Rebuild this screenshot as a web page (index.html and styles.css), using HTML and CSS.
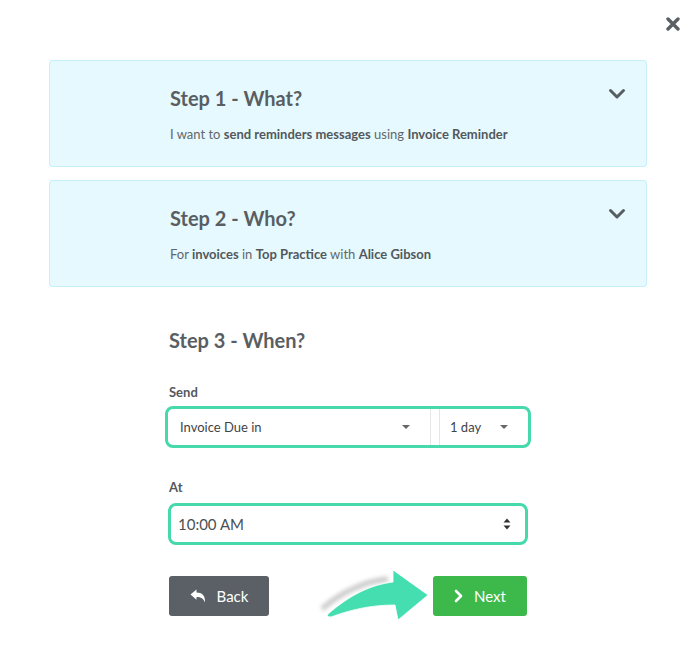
FILE: index.html
```html
<!DOCTYPE html>
<html lang="en">
  <head>
    <meta charset="UTF-8" />
    <meta name="viewport" content="width=device-width, initial-scale=1.0" />
    <link rel="stylesheet" href="styles.css">
    <title>New Reminder</title>
  </head>
  <body>
    <div class="modal">
      <button class="close" title="Close">
        <svg width="14" height="14" viewBox="0 0 14 14">
          <path d="M2 2 L12 12 M12 2 L2 12" stroke="#5b5f63" stroke-width="3.4" stroke-linecap="round" />
        </svg>
      </button>

      <!-- finished steps, collapsed -->
      <div class="card">
        <div class="card-body">
          <h2>Step 1 - What?</h2>
          <p>I want to <b>send reminders messages</b> using <b>Invoice Reminder</b></p>
        </div>
        <svg class="chevron" width="18" height="12" viewBox="0 0 18 12">
          <path d="M2.5 2.5 L9 9 L15.5 2.5" fill="none" stroke="#595e62" stroke-width="3" stroke-linecap="round" stroke-linejoin="round" />
        </svg>
      </div>

      <div class="card">
        <div class="card-body">
          <h2>Step 2 - Who?</h2>
          <p>For <b>invoices</b> in <b>Top Practice</b> with <b>Alice Gibson</b></p>
        </div>
        <svg class="chevron" width="18" height="12" viewBox="0 0 18 12">
          <path d="M2.5 2.5 L9 9 L15.5 2.5" fill="none" stroke="#595e62" stroke-width="3" stroke-linecap="round" stroke-linejoin="round" />
        </svg>
      </div>

      <!-- current step -->
      <div class="step">
        <h2>Step 3 - When?</h2>

        <label class="label">Send</label>
        <div class="ring send">
          <div class="select wide">
            <span>Invoice Due in</span>
            <span class="caret"></span>
          </div>
          <div class="select narrow">
            <span>1 day</span>
            <span class="caret"></span>
          </div>
        </div>

        <label class="label at">At</label>
        <div class="ring time">
          <span>10:00 AM</span>
          <svg width="8" height="12" viewBox="0 0 8 12">
            <path d="M4 0.5 L7.5 4.5 L0.5 4.5 Z M4 11.5 L7.5 7.5 L0.5 7.5 Z" fill="#333" />
          </svg>
        </div>

        <div class="actions">
          <button class="btn back">
            <svg width="16" height="14" viewBox="0 0 16 14">
              <path d="M0.5 5.5 L6.5 0.5 L6.5 3.4 C12 3.4 15.5 6.5 15 13.5 C13.5 9.5 11 8 6.5 8 L6.5 10.8 Z" fill="#fff" />
            </svg>
            Back
          </button>
          <button class="btn next">
            <svg width="9" height="14" viewBox="0 0 9 14">
              <path d="M2 2 L7 7 L2 12" fill="none" stroke="#fff" stroke-width="2.6" stroke-linecap="round" stroke-linejoin="round" />
            </svg>
            Next
          </button>

          <!-- pointer towards the next button -->
          <svg class="pointer" width="124" height="62" viewBox="0 0 124 62">
            <defs>
              <filter id="soft" x="-30%" y="-30%" width="160%" height="160%">
                <feGaussianBlur stdDeviation="2.2" />
              </filter>
            </defs>
            <path d="M12 44 C 30 28 55 16 78 14" fill="none" stroke="#9a9a9a" stroke-width="5" opacity="0.55" filter="url(#soft)" />
            <path d="M18 49 C 40 30 60 20 83 17 L83 5 L118 30 L88 55 L85 40 C 60 40 40 45 21 52 Q 16 52 18 49 Z" fill="#45deb0" stroke="#fff" stroke-width="0.8" />
          </svg>
        </div>
      </div>
    </div>
  </body>
</html>
```

FILE: styles.css
```css
body {
  margin: 0;
  font-family: Lato, "Open Sans", sans-serif;
  color: #595e62;
  background-color: #fff;
}

.modal {
  position: relative;
  width: 694px;
  height: 670px;
  padding: 60px 47px 0 49px;
  box-sizing: border-box;
}

.close {
  position: absolute;
  top: 17px;
  left: 666px;
  padding: 0;
  border: none;
  background: none;
  line-height: 0;
  cursor: pointer;
}

h2 {
  margin: 0;
  font-size: 20px;
  line-height: 24px;
  font-weight: 700;
  color: #595e62;
}

/* collapsed step cards */
.card {
  display: flex;
  justify-content: space-between;
  height: 107px;
  box-sizing: border-box;
  margin-bottom: 13px;
  padding: 25px 20px 0 120px;
  background-color: #e6f9fe;
  border: 1px solid #c6eff9;
  border-radius: 3px;
}

.card p {
  margin: 16px 0 0;
  font-size: 13px;
  line-height: 16px;
  color: #62676b;
}

.card b {
  font-weight: 700;
  color: #53585c;
}

.chevron {
  margin-top: 2px;
}

/* current step form */
.step {
  width: 358px;
  margin: 41px 0 0 120px;
}

.label {
  display: block;
  margin-top: 32px;
  font-size: 13px;
  line-height: 16px;
  font-weight: 700;
  color: #53585c;
}

.label.at {
  margin-top: 31px;
}

.ring {
  display: flex;
  align-items: center;
  box-sizing: border-box;
  height: 42px;
  background-color: #fff;
  border: 3px solid #45d9ab;
  border-radius: 8px;
}

.send {
  margin: 6px -4px 0 -4px;
}

.select {
  display: flex;
  align-items: center;
  justify-content: space-between;
  box-sizing: border-box;
  height: 100%;
  font-size: 13px;
  color: #3f4447;
  white-space: nowrap;
}

.select.wide {
  width: 263px;
  padding: 0 20px 0 12px;
  border-right: 1px solid #e6e6e6;
}

.select.narrow {
  flex: 1;
  margin-left: 8px;
  padding: 0 20px 0 10px;
  border-left: 1px solid #e6e6e6;
}

.caret {
  width: 0;
  height: 0;
  border-left: 4px solid transparent;
  border-right: 4px solid transparent;
  border-top: 4px solid #666;
}

.time {
  justify-content: space-between;
  margin: 8px -1px 0 -1px;
  padding: 0 14px 0 7px;
  font-size: 15px;
  color: #4a4f53;
}

/* buttons */
.actions {
  position: relative;
  display: flex;
  justify-content: space-between;
  margin-top: 31px;
}

.btn {
  display: flex;
  align-items: center;
  justify-content: center;
  gap: 11px;
  height: 40px;
  border: none;
  border-radius: 3px;
  font-family: Lato, "Open Sans", sans-serif;
  font-size: 15px;
  color: #fff;
  cursor: pointer;
}

.back {
  width: 100px;
  background-color: #5a6066;
}

.next {
  width: 94px;
  background-color: #3cb94a;
}

.pointer {
  position: absolute;
  left: 141px;
  top: -11px;
}
```
